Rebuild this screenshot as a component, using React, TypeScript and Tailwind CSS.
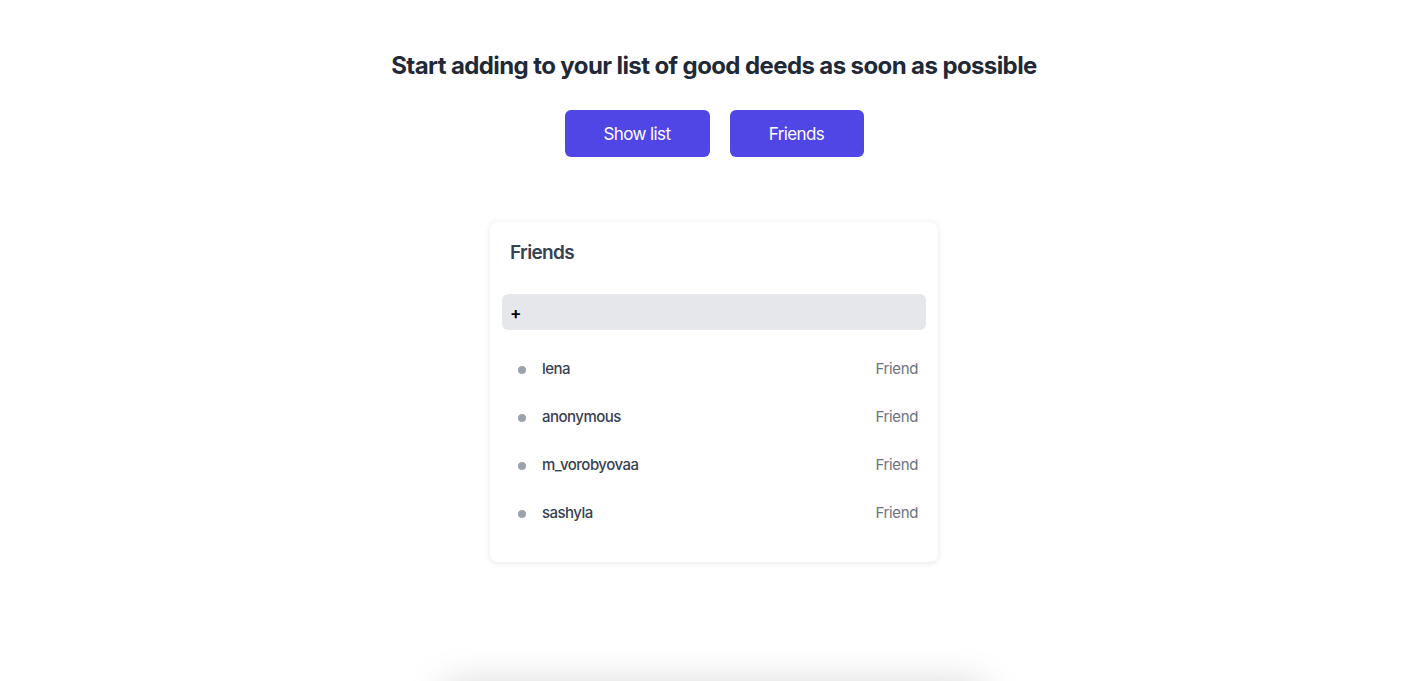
import React from "react";

const friends = ["lena", "anonymous", "m_vorobyovaa", "sashyla"];

export default function App() {
  return (
    <div
      className="min-h-screen bg-white flex flex-col items-center pt-[50px] overflow-hidden"
      style={{ fontFamily: "Inter, 'Noto Sans', sans-serif" }}
    >
      <h1 className="text-2xl font-bold text-[#1f2937] leading-8 tracking-[-0.025em]">
        Start adding to your list of good deeds as soon as possible
      </h1>
      <div className="flex gap-5 mt-7">
        <button className="bg-[#4f46e5] text-white text-[17px] tracking-[-0.035em] rounded-md w-[145px] h-[47px] pt-[2px]">
          Show list
        </button>
        <button className="bg-[#4f46e5] text-white text-[17px] tracking-[-0.035em] rounded-md w-[134px] h-[47px] pt-[2px]">
          Friends
        </button>
      </div>
      <div className="mt-[65px] w-[448px] bg-white rounded-lg shadow-[0_1px_6px_rgba(0,0,0,0.1)] pt-[17px] pb-[26px]">
        <h2 className="text-[19px] font-semibold text-[#374151] px-5 leading-7 tracking-[-0.035em]">Friends</h2>
        <div className="mx-3 mt-[27px] h-9 bg-[#e5e7eb] rounded-md flex items-center pl-2 pt-[2px]">
          <span className="text-[17px] font-semibold text-black leading-none">+</span>
        </div>
        <ul className="mt-3.5">
          {friends.map((f) => (
            <li key={f} className="h-12 flex items-center pl-[28px] pr-5 pt-[2px]">
              <span className="w-2 h-2 rounded-full bg-[#9ca3af] mt-[1px] mr-4" />
              <span className="text-[15px] font-medium text-[#374151] tracking-[-0.035em]">{f}</span>
              <span className="ml-auto text-[15px] text-[#6b7280] tracking-[-0.025em]">Friend</span>
            </li>
          ))}
        </ul>
      </div>
      <div className="mt-[124px] w-[540px] h-40 bg-white rounded-lg shadow-[0_0_40px_rgba(0,0,0,0.18)] shrink-0" />
    </div>
  );
}
